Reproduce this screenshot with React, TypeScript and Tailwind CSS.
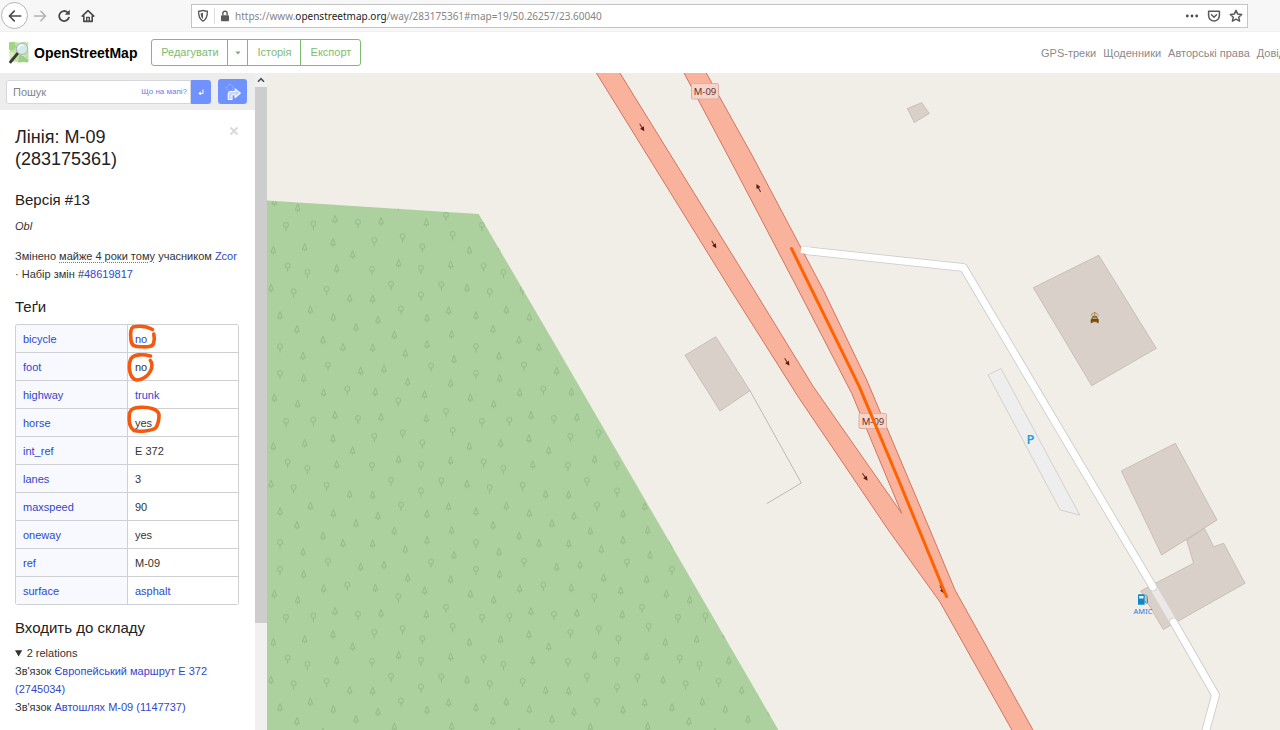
import React from "react";

type Tag = { name: string; value: string; linked?: boolean };

const TAGS: Tag[] = [
  { name: "bicycle", value: "no", linked: true },
  { name: "foot", value: "no" },
  { name: "highway", value: "trunk", linked: true },
  { name: "horse", value: "yes" },
  { name: "int_ref", value: "E 372" },
  { name: "lanes", value: "3" },
  { name: "maxspeed", value: "90" },
  { name: "oneway", value: "yes" },
  { name: "ref", value: "M-09" },
  { name: "surface", value: "asphalt", linked: true },
];

/* Positions inside one repeating forest tile, in thirds of a pixel. */
const ROUND_TREES: [number, number][] = [
  [78, 108], [160, 104], [294, 99], [558, 78], [343, 153], [428, 142], [487, 172], [578, 135],
  [83, 230], [142, 249], [336, 240], [483, 237], [101, 307], [200, 300], [393, 285], [483, 317],
  [544, 286], [423, 359], [60, 472], [204, 527], [513, 530], [60, 552], [262, 599], [415, 634],
  [415, 46],
];
const FIR_TREES: [number, number][] = [
  [113, 54], [113, 642], [225, 88], [363, 94], [499, 98], [40, 181], [628, 181], [134, 172],
  [219, 158], [278, 194], [230, 236], [416, 220], [572, 224], [33, 294], [621, 294], [269, 325],
  [338, 327], [60, 377], [151, 360], [220, 382], [288, 412], [354, 390], [501, 384], [566, 362],
  [111, 418], [189, 450], [249, 472], [338, 473], [403, 435], [575, 433], [501, 463], [436, 490],
  [129, 498], [302, 543], [372, 537], [582, 508], [131, 565], [191, 608], [346, 606], [443, 576],
  [494, 614], [572, 580], [43, 624], [43, 36],
];

function BrowserBar() {
  return (
    <div className="flex h-8 shrink-0 items-center border-b border-[#f0f0f0] bg-[#f7f7f7] pr-8 pl-px">
      <button type="button" aria-label="Back" className="flex size-[27px] shrink-0 items-center justify-center rounded-full border border-[#b5b5b5] bg-white">
        <svg viewBox="0 0 16 16" className="size-4" fill="none" stroke="#4a4a4a" strokeWidth="1.7" strokeLinecap="round" strokeLinejoin="round">
          <path d="M13.6 8H2.6M7.2 3.2 2.4 8l4.8 4.8" />
        </svg>
      </button>
      <button type="button" aria-label="Forward" className="ml-1 flex size-4 shrink-0 items-center justify-center">
        <svg viewBox="0 0 16 16" className="size-4" fill="none" stroke="#b4b4b4" strokeWidth="1.6" strokeLinecap="round" strokeLinejoin="round">
          <path d="M2.5 8h11M9 3.4 13.6 8 9 12.6" />
        </svg>
      </button>
      <button type="button" aria-label="Reload" className="ml-2 flex size-4 shrink-0 items-center justify-center">
        <svg viewBox="0 0 16 16" className="size-4" fill="none" stroke="#4a4a4a" strokeWidth="1.8" strokeLinecap="round">
          <path d="M12.9 9.6A5 5 0 1 1 11.6 4.4" />
          <path d="M13.8 1.8v5H8.8z" fill="#4a4a4a" stroke="none" />
        </svg>
      </button>
      <button type="button" aria-label="Home" className="ml-2 flex size-4 shrink-0 items-center justify-center">
        <svg viewBox="0 0 16 16" className="size-4" fill="none" stroke="#4a4a4a" strokeWidth="1.6" strokeLinecap="round" strokeLinejoin="round">
          <path d="M2.2 8.2 8 2.6l5.8 5.6M3.8 8v5.4h8.4V8" />
          <path d="M6.7 13.4V9.4h2.6v4" strokeWidth="1.4" />
        </svg>
      </button>
      <div className="ml-[95px] flex h-6 min-w-0 flex-1 items-center border border-[#c4c4c4] bg-white pr-1 pl-1">
        <svg viewBox="0 0 16 16" className="size-3.5 shrink-0" fill="none" stroke="#5a5a5a" strokeWidth="1.5" strokeLinejoin="round">
          <path d="M3 2.6c2-.1 3.5-.4 5-1 1.5.6 3 .9 5 1 .2 5-1.2 9-5 11.4C4.2 11.6 2.8 7.6 3 2.6Z" />
          <path d="M8 4.4v7c-1.800-1.600-2.600-3.700-2.700-6.400Z" fill="#5a5a5a" stroke="none" />
        </svg>
        <span className="ml-1 h-4 w-px bg-[#dddddd]" />
        <svg viewBox="0 0 12 14" className="ml-1 h-3 w-3 shrink-0">
          <path d="M3.5 6V4a2.500 2.500 0 0 1 5 0v2" fill="none" stroke="#5a5a5a" strokeWidth="1.6" />
          <rect x="1.3" y="6" width="9.4" height="7" rx="1" fill="#5a5a5a" />
        </svg>
        <div className="ml-1 min-w-0 flex-1 truncate font-['Noto_Sans',sans-serif] text-[10px] leading-4 text-[#858585]">
          https://www.<span className="text-[#1c1c1c]">openstreetmap.org</span>/way/283175361#map=19/50.26257/23.60040
        </div>
        <div className="flex items-center gap-2">
          <button type="button" aria-label="Page actions">
            <svg viewBox="0 0 14 14" className="size-3.5" fill="#4a4a4a">
              <circle cx="2.3" cy="7" r="1.4" /><circle cx="7" cy="7" r="1.4" /><circle cx="11.7" cy="7" r="1.4" />
            </svg>
          </button>
          <button type="button" aria-label="Save to Pocket">
            <svg viewBox="0 0 14 14" className="size-3.5" fill="none" stroke="#5a5a5a" strokeWidth="1.5" strokeLinecap="round" strokeLinejoin="round">
              <path d="M1.6 2.2h10.8v4.4a5.400 5.400 0 0 1-10.800 0Z" />
              <path d="m4.5 5.800 2.500 2.400 2.500-2.400" />
            </svg>
          </button>
          <button type="button" aria-label="Bookmark this page">
            <svg viewBox="0 0 14 14" className="size-3.5" fill="none" stroke="#5a5a5a" strokeWidth="1.5" strokeLinejoin="round">
              <path d="m7 1.400 1.700 3.700 4 .4-3 2.700.9 4L7 10.200l-3.600 2 .9-4-3-2.700 4-.4Z" />
            </svg>
          </button>
        </div>
      </div>
    </div>
  );
}

function Logo() {
  return (
    <svg viewBox="0 0 22 24" className="h-6 w-[22px] shrink-0">
      <path d="M1 1.500 6 .8l5 1 5-1 4.500.7-.5 6 .8 5-.8 5 .3 3.500-5-.6-5 .8-4-.8-4.500.4.500-5-.8-5 .500-5Z" fill="#c3e2a8" />
      <path d="M1 1.500 6 .8l2 5-3 4-4-1Z" fill="#a2d486" />
      <path d="m11 14 9.500 2 -.300 5.500-5-.600-5 .800Z" fill="#9bd085" />
      <path d="M1.200 12 5 11l2 3-5.500 5Z" fill="#dcebc0" />
      <path d="M13 13c3 1 5 4 7.500 5" fill="none" stroke="#f1f0cf" strokeWidth="1" />
      <path d="m9.500 12.500-7 8.500" stroke="#3b3b35" strokeWidth="2.800" strokeLinecap="round" />
      <circle cx="14" cy="7.800" r="5.700" fill="#d5e9ea" stroke="#a3b8ae" strokeWidth="1" />
      <path d="M10.500 7.500c0-2.500 2.500-3.800 4.500-3" fill="none" stroke="#fff" strokeWidth="1.300" strokeLinecap="round" />
    </svg>
  );
}

function SiteHeader() {
  return (
    <header className="flex h-[41px] shrink-0 items-center overflow-hidden bg-white pl-2">
      <a href="#home" className="flex items-center gap-1">
        <Logo />
        <h1 className="text-sm leading-5 font-bold text-black">OpenStreetMap</h1>
      </a>
      <div className="ml-[14px] flex h-[27px] shrink-0 divide-x divide-[#7ebc6f] rounded-[3px] border border-[#7ebc6f] text-[11px] text-[#7ebc6f]">
        <a href="#edit" className="flex w-[76px] items-center justify-center">Редагувати</a>
        <button type="button" aria-label="Редактори" className="flex w-5 items-center justify-center">
          <svg viewBox="0 0 6 4" className="h-1 w-1.5"><path d="M.5.500h5L3 3.500Z" fill="#6fae60" /></svg>
        </button>
        <a href="#history" className="flex w-[53px] items-center justify-center">Історія</a>
        <a href="#export" className="flex w-[59px] items-center justify-center">Експорт</a>
      </div>
      <div className="flex-1" />
      <nav className="flex w-[239px] shrink-0 gap-[7px] overflow-hidden text-[11px] leading-4 whitespace-nowrap text-[#8a8a8a]">
        <a href="#traces">GPS-треки</a>
        <a href="#diaries">Щоденники</a>
        <a href="#copyright">Авторські права</a>
        <a href="#help">Довідка</a>
      </nav>
    </header>
  );
}

function SearchBar() {
  return (
    <form className="flex h-[37px] shrink-0 items-center bg-[#ededed] pl-1.5" onSubmit={(e) => e.preventDefault()}>
      <div className="flex h-6 w-[185px] items-center rounded-l-[3px] border border-[#d3d6da] bg-white pr-[3px] pl-1.5">
        <input aria-label="Пошук" placeholder="Пошук" className="min-w-0 flex-1 text-[11px] leading-4 outline-none placeholder:text-[#7d848b]" />
        <a href="#where" className="shrink-0 text-[8px] leading-4 text-[#6480f0]">Що на мапі?</a>
      </div>
      <button type="submit" aria-label="Знайти" className="flex h-6 w-5 items-center justify-center rounded-r-[3px] bg-[#7092ff]">
        <svg viewBox="0 0 8 8" className="size-2" fill="none" stroke="#fff" strokeWidth="1"><path d="M6 1.500v4H3" /><path d="M3.800 3.200v4L1.300 5.400Z" fill="#fff" stroke="none" /></svg>
      </button>
      <button type="button" aria-label="Маршрут" className="ml-[7px] flex h-[25px] w-[29px] items-center justify-center rounded-[3px] bg-[#7092ff]">
        <svg viewBox="0 0 18 18" className="size-[18px]" fill="none">
          <path d="M5.800.8 10 5l-4.200 4.200L1.600 5Z" stroke="#b9c9ff" strokeWidth=".8" strokeDasharray="1.5 1" />
          <path d="M4.300 16.500v-5.200c0-1.800 1-2.800 2.800-2.800h4V5.800l5.300 4.400-5.300 4.400v-2.800H8v4.700Z" fill="#c6d3ff" stroke="#fff" strokeWidth="1.100" strokeLinejoin="round" />
        </svg>
      </button>
    </form>
  );
}

function TagTable() {
  return (
    <div className="relative mt-[7px] w-[224px]">
      <table className="w-full border-separate border-spacing-0 overflow-hidden rounded-[3px] border-t border-l border-[#cfd0d4]">
        <tbody>
          {TAGS.map((tag) => (
            <tr key={tag.name} className="h-7">
              <th scope="row" className="w-[112px] border-r border-b border-[#cfd0d4] bg-[#f8f9ff] px-[7px] py-0 text-left font-normal">
                <a href={`#${tag.name}`} className="text-[#2f47cc]">{tag.name}</a>
              </th>
              <td className="border-r border-b border-[#cfd0d4] px-[7px] py-0">
                {tag.linked ? <a href={`#${tag.value}`} className="text-[#2f47cc]">{tag.value}</a> : tag.value}
              </td>
            </tr>
          ))}
        </tbody>
      </table>
      <svg viewBox="125 320 40 116" className="pointer-events-none absolute -top-1 left-[110px] h-[116px] w-10" fill="none" stroke="#f4590f" strokeWidth="3.6" strokeLinecap="round">
        <path d="M152.500 329.500C147 326.500 139 325.800 133 327C130 329 130.500 336 131 340C131.500 346 135 346.800 141 346.800C148 347 152 347 153.500 343.500C154.300 341 154.500 337 153.800 334" />
        <path d="M150.500 356C143 354 134 354 130.800 359C127.800 366 129.500 377 135 379.500C141 381.500 149 376 151.500 368.500C152.500 364.500 151.500 362 150.300 360.500" />
        <path d="M141 407.300C149 407 158 409 159 414.500C159.300 420 157.500 426 155.500 428C152 431 139 432 134 430.500C129 427 128.500 420 129.500 413C131 408.500 134 407.600 141 407.300Z" />
      </svg>
    </div>
  );
}

function Sidebar() {
  return (
    <aside className="flex w-[255px] shrink-0 flex-col overflow-hidden">
      <SearchBar />
      <div className="min-h-0 flex-1 overflow-hidden pr-4 pl-[15px] text-[11px] leading-[18px] text-[#333]">
        <div className="flex items-start justify-between pt-4">
          <h2 className="w-[150px] text-lg leading-[22px] text-[#222]">Лінія: M-09 (283175361)</h2>
          <button type="button" aria-label="Закрити" className="flex size-2.5 items-center justify-center">
            <svg viewBox="0 0 10 10" className="size-2.5" stroke="#dadada" strokeWidth="2"><path d="m1.500 1.500 7 7M8.500 1.500l-7 7" /></svg>
          </button>
        </div>
        <h3 className="mt-5 text-[15px] leading-5 text-[#222]">Версія #13</h3>
        <p className="mt-[7px] italic">Obl</p>
        <p className="mt-3 whitespace-nowrap">
          Змінено <abbr title="2017" className="underline decoration-[#777] decoration-dotted underline-offset-2">майже 4 роки тому</abbr> учасником <a href="#user" className="text-[#2f47cc]">Zcor</a>
          <br />· Набір змін #<a href="#changeset" className="text-[#2f47cc]">48619817</a>
        </p>
        <h3 className="mt-[14px] text-[15px] leading-5 text-[#222]">Теґи</h3>
        <TagTable />
        <h3 className="mt-[13px] text-[15px] leading-5 text-[#222]">Входить до складу</h3>
        <details open className="mt-1.5">
          <summary>2 relations</summary>
          <ul>
            <li>Зв'язок <a href="#r2745034" className="text-[#2f47cc]">Європейський маршрут E 372 (2745034)</a></li>
            <li>Зв'язок <a href="#r1147737" className="text-[#2f47cc]">Автошлях М-09 (1147737)</a></li>
          </ul>
        </details>
      </div>
    </aside>
  );
}

function Scrollbar() {
  return (
    <div className="flex w-3 shrink-0 flex-col bg-[#f0f0f0]" aria-hidden="true">
      <div className="flex h-[14px] shrink-0 items-center justify-center">
        <svg viewBox="0 0 8 6" className="h-1.5 w-2" fill="none" stroke="#505050" strokeWidth="1.600"><path d="M1 4.800 4 1.600l3 3.200" /></svg>
      </div>
      <div className="flex-[5] bg-[#cdcdcd]" />
      <div className="flex-1" />
    </div>
  );
}

function Arrow({ x, y, angle }: { x: number; y: number; angle: number }) {
  return (
    <g transform={`translate(${x} ${y}) rotate(${angle})`}>
      <path d="M-4.500 0H2" stroke="#6b2a22" strokeWidth="1" />
      <path d="M0-2.200 4.500 0 0 2.200Z" fill="#5a1a14" />
    </g>
  );
}

function MapView() {
  const service = "M800 250 963.500 267.500 1153 587";
  const serviceEnd = "M1173.500 622 1215.500 695 1203 741";
  return (
    <main className="min-w-0 flex-1 bg-[#f1eee8]">
      <svg viewBox="267 73 1013 657" preserveAspectRatio="xMinYMin slice" className="block h-full w-full font-['Noto_Sans',sans-serif]" role="img" aria-label="Мапа">
        <defs>
          <g id="round" fill="none" stroke="#8fb683" strokeWidth=".9"><circle cy="-1" r="2.5" /><path d="M0 1.500v3.700" /></g>
          <g id="fir" fill="none" stroke="#8fb683" strokeWidth=".9"><path d="M0-3.900-2.400 2.200h4.800ZM0 2.200v2" /></g>
          <pattern id="forest" patternUnits="userSpaceOnUse" x="267" y="203.300" width="196" height="196">
            <g transform="translate(-7 -13.300)">
              {ROUND_TREES.map(([x, y]) => <use key={`${x}-${y}`} href="#round" x={x / 3} y={y / 3} />)}
              {FIR_TREES.map(([x, y]) => <use key={`${x}-${y}`} href="#fir" x={x / 3} y={y / 3} />)}
            </g>
          </pattern>
        </defs>

        <path d="M260 200 478.700 214 560 353 779 731H260Z" fill="#add19e" />
        <path d="M260 200 478.700 214 560 353 779 731H260Z" fill="url(#forest)" />

        <g fill="#d9d0c9" stroke="#c3b6ae" strokeWidth=".8">
          <path d="M907.300 108.500 921.700 102.700 929.300 113.500 914.300 122.500Z" />
          <path d="M685 355.300 715.700 336.700 750 390.700 720 411Z" />
          <path d="M1033.300 287.700 1098.700 255.300 1156.300 348.300 1091.700 385.700Z" />
          <path d="M1186.700 540 1204.300 528.300 1213.700 546.700 1223.700 543.300 1245 583.300 1163.300 629.500 1140.700 591 1193.500 563.300Z" />
          <path d="M1121.300 471 1175.300 443.300 1217 520 1161.700 555Z" />
        </g>
        <path d="M750 390.700 801.300 483 766.700 503.700" fill="none" stroke="#bdb9b3" />
        <path d="M988 375 1001 368.500 1079.700 515 1060.300 510Z" fill="#eeeeee" stroke="#d0ccc7" strokeWidth=".9" />

        <path d="M1153 587 1173.500 622" stroke="#ebe8e7" strokeWidth="7" />
        <g fill="none" stroke="#cccac6" strokeWidth="8.600" strokeLinejoin="round" strokeLinecap="round"><path d={service} /><path d={serviceEnd} /></g>
        <g fill="none" stroke="#fff" strokeWidth="7" strokeLinejoin="round" strokeLinecap="round"><path d={service} /><path d={serviceEnd} /></g>

        <path
          d="M590.500 63.500 730.700 290 798.300 397 888.300 530 940 602 1017 739H1038L955 590 930 530 866.700 380 823.300 290 753 157 701 63.500H679L736 171 798.300 290 851.700 393.300 901.700 513.300 813.300 386.700 754 290 614 63.500Z"
          fill="#f9b29c" stroke="#d3735f" strokeWidth="1"
        />
        <path d="M801 249.600 810 250.700" stroke="#fff" strokeWidth="7" />

        <Arrow x={642} y={127.500} angle={59} />
        <Arrow x={714} y={244.500} angle={59} />
        <Arrow x={787} y={362} angle={58} />
        <Arrow x={865} y={477} angle={55} />
        <Arrow x={758.500} y={188} angle={-118} />
        <Arrow x={942} y={589.500} angle={62} />

        <g fontSize="9.500" textAnchor="middle" fill="#65302a">
          <rect x="691.500" y="83.500" width="27" height="15.500" rx="1" fill="#f7d4ca" stroke="#dcaea4" />
          <text x="705" y="95">M-09</text>
          <rect x="859" y="413.500" width="27.500" height="15" rx="1" fill="#f7d4ca" stroke="#dcaea4" />
          <text x="873" y="424.500">M-09</text>
        </g>
        <path d="M791.500 248.500 859.300 386.700 899 481 946.500 596.500" fill="none" stroke="#ff6200" strokeWidth="3" strokeLinecap="round" strokeLinejoin="round" />

        <text x="1030.500" y="443.500" fontSize="13" fontWeight="600" textAnchor="middle" fill="#2a9fd8">P</text>

        <g fill="none" stroke="#96692a">
          <path d="M1094.700 312v3.500M1091.300 315.500c.500-2 1.800-2.600 3.400-2.600s2.900.6 3.400 2.600" strokeWidth=".9" strokeDasharray="1.4 .7" />
          <path d="M1090.900 322.800v-3.400l1-.9.800-2.300h4l.8 2.300 1 .9v3.400h-1.500v-1h-4.600v1Z" fill="#7a4b08" stroke="#7a4b08" strokeWidth=".4" />
          <path d="M1092.700 318.100h4" stroke="#d9d0c9" strokeWidth="1.100" />
        </g>

        <g>
          <path d="M1138 604.800v-9.300c0-.8.500-1.200 1.200-1.200h4.300c.8 0 1.200.5 1.200 1.200v9.300Z" fill="#0e86c9" />
          <path d="M1139.200 596h4.300v2.500h-4.300Z" fill="#e9f3f8" />
          <path d="M1144.700 600.500c1.300 0 1 3 1.900 3s1-1 .8-2.500l-.4-4.500-1.700-1.800" fill="none" stroke="#0e86c9" strokeWidth=".9" />
          <text x="1143" y="613.500" fontSize="7.500" textAnchor="middle" fill="#1a7ae0">AMIC</text>
        </g>
      </svg>
    </main>
  );
}

export default function App() {
  return (
    <div className="flex h-screen flex-col overflow-hidden bg-white font-['Liberation_Sans',Arial,sans-serif]">
      <BrowserBar />
      <SiteHeader />
      <div className="flex min-h-0 flex-1">
        <Sidebar />
        <Scrollbar />
        <MapView />
      </div>
    </div>
  );
}
